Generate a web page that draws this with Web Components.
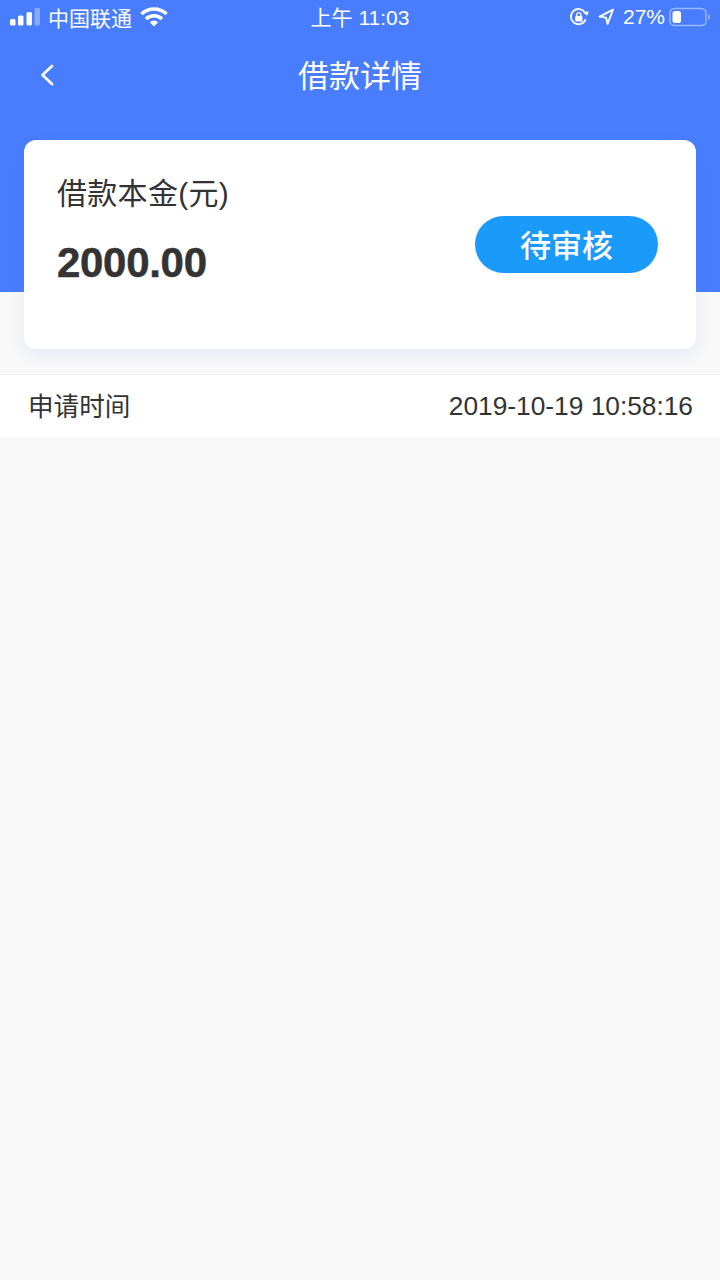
<!DOCTYPE html>
<html lang="zh">
<head>
<meta charset="utf-8">
<title>借款详情</title>
<style>
  html, body { margin: 0; height: 100%; }
  body { font-family: "Liberation Sans", "Noto Sans CJK SC", sans-serif; }
</style>
</head>
<body>
<loan-page>
  <status-bar></status-bar>
  <nav-bar>借款详情</nav-bar>
  <loan-card label="借款本金(元)" amount="2000.00" status="待审核"></loan-card>
  <info-row label="申请时间" value="2019-10-19 10:58:16"></info-row>
</loan-page>

<script>
class LoanPage extends HTMLElement {
  constructor() {
    super();
    this.attachShadow({ mode: "open" });
    this.shadowRoot.innerHTML = `
    <style>
    :host {
      display: flex;
      flex-direction: column;
      width: 720px;
      height: 1280px;
      overflow: hidden;
      background: linear-gradient(#487dff 292px, #f8f8f9 292px);
    }
    </style>
    <slot></slot>
    `;
  }
}
customElements.define("loan-page", LoanPage);

class StatusBar extends HTMLElement {
  constructor() {
    super();
    this.attachShadow({ mode: "open" });
    this.shadowRoot.innerHTML = `
    <style>
    :host {
      display: grid;
      grid-template-columns: 1fr auto 1fr;
      align-items: center;
      height: 34px;
      padding: 0 10px;
      color: #fff;
      font-size: 21px;
    }
    .left, .right { display: flex; align-items: center; }
    .right { justify-content: flex-end; }
    svg { display: block; }
    .carrier { margin: 0 8px; padding-bottom: 1px; }
    .pct { margin: 0 4px 0 9px; padding-bottom: 1px; }
    .time { padding-bottom: 2px; }
    </style>
    <div class="left">
      <svg width="30" height="20" viewBox="0 0 30 20">
        <rect x="0" y="12" width="5.500" height="6.500" rx="1.500" fill="#fff"/>
        <rect x="8" y="8.500" width="5.500" height="10" rx="1.500" fill="#fff"/>
        <rect x="16.500" y="5" width="5.500" height="13.500" rx="1.500" fill="#fff"/>
        <rect x="24.500" y="1" width="5.500" height="17.500" rx="1.500" fill="#fff" opacity=".35"/>
      </svg>
      <span class="carrier">中国联通</span>
      <svg width="28" height="20" viewBox="0 0 28 20">
        <path d="M1.500 7a18 18 0 0 1 25 0" fill="none" stroke="#fff" stroke-width="3.600"/>
        <path d="M6 12a11.500 11.500 0 0 1 16 0" fill="none" stroke="#fff" stroke-width="3.600"/>
        <path d="M9.800 15.200a6 6 0 0 1 8.400 0L14 19.600z" fill="#fff"/>
      </svg>
    </div>
    <div class="time">上午 11:03</div>
    <div class="right">
      <svg width="20" height="20" viewBox="0 0 20 20">
        <path d="M16.600 12.400A7.600 7.600 0 1 1 16 5.600" fill="none" stroke="#fff" stroke-width="1.800"/>
        <path d="M14 5.600l4.400 3.200 1.200-4.600z" fill="#fff"/>
        <rect x="6.200" y="9" width="7.200" height="5.600" rx="1" fill="#fff"/>
        <path d="M7.800 9.500V7.600a2 2 0 0 1 4 0v1.900" fill="none" stroke="#fff" stroke-width="1.300"/>
      </svg>
      <svg width="16" height="18" viewBox="0 0 16 18" style="margin-left:9px">
        <path d="M15 1.600L1.600 8.600l6.400 1 1.600 6.400z" fill="none" stroke="#fff" stroke-width="1.900" stroke-linejoin="round"/>
      </svg>
      <span class="pct">27%</span>
      <svg width="41" height="20" viewBox="0 0 41 20">
        <rect x="1" y="1.500" width="36" height="17" rx="4.500" fill="none" stroke="#fff" stroke-opacity=".45" stroke-width="1.400"/>
        <rect x="3.500" y="4" width="8.500" height="12" rx="2.500" fill="#fff"/>
        <path d="M39 7.200c1.200.4 1.800 1.400 1.800 2.800s-.6 2.400-1.800 2.800z" fill="#fff" fill-opacity=".45"/>
      </svg>
    </div>
    `;
  }
}
customElements.define("status-bar", StatusBar);

class NavBar extends HTMLElement {
  constructor() {
    super();
    this.attachShadow({ mode: "open" });
    this.shadowRoot.innerHTML = `
    <style>
    :host {
      display: grid;
      grid-template-columns: 1fr auto 1fr;
      align-items: center;
      height: 82px;
      margin-bottom: 24px;
      padding: 0 40px;
      color: #fff;
      font-size: 31px;
    }
    .title { padding-bottom: 4px; }
    svg { display: block; }
    </style>
    <svg width="14" height="22" viewBox="0 0 14 22">
      <path d="M12 2L2.500 11 12 20" fill="none" stroke="#fff" stroke-width="2.700" stroke-linecap="round" stroke-linejoin="round"/>
    </svg>
    <div class="title"><slot></slot></div>
    <span></span>
    `;
  }
}
customElements.define("nav-bar", NavBar);

class LoanCard extends HTMLElement {
  constructor() {
    super();
    this.attachShadow({ mode: "open" });
    this.shadowRoot.innerHTML = `
    <style>
    :host {
      display: flex;
      justify-content: space-between;
      box-sizing: border-box;
      height: 209px;
      margin: 0 24px 25px;
      padding: 36px 38px 0 33px;
      background: #fff;
      border-radius: 12px;
      box-shadow: 0 6px 16px rgba(72, 110, 220, .09);
      color: #333;
    }
    .label { font-size: 30px; line-height: 36px; letter-spacing: .3px; }
    .amount {
      margin-top: 22px;
      font-size: 42px;
      line-height: 58px;
      font-weight: bold;
      letter-spacing: -.3px;
      -webkit-text-stroke: .5px #333;
    }
    .status {
      align-self: flex-start;
      width: 183px;
      height: 57px;
      margin-top: 40px;
      border-radius: 29px;
      background: #1a9bfc;
      color: #fff;
      font-size: 31px;
      font-weight: 500;
      line-height: 61px;
      text-align: center;
    }
    </style>
    <div>
      <div class="label"></div>
      <div class="amount"></div>
    </div>
    <div class="status"></div>
    `;
  }
  connectedCallback() {
    this.shadowRoot.querySelector(".label").textContent = this.getAttribute("label");
    this.shadowRoot.querySelector(".amount").textContent = this.getAttribute("amount");
    this.shadowRoot.querySelector(".status").textContent = this.getAttribute("status");
  }
}
customElements.define("loan-card", LoanCard);

class InfoRow extends HTMLElement {
  constructor() {
    super();
    this.attachShadow({ mode: "open" });
    this.shadowRoot.innerHTML = `
    <style>
    :host {
      display: flex;
      justify-content: space-between;
      align-items: center;
      box-sizing: border-box;
      height: 63px;
      padding: 0 27px 2px 28px;
      background: #fff;
      border-top: 1px solid #f1f1f3;
      color: #333;
      font-size: 25.600px;
    }
    .label { margin-bottom: 2px; }
    .value { margin-top: 2px; font-size: 26.300px; }
    </style>
    <span class="label"></span>
    <span class="value"></span>
    `;
  }
  connectedCallback() {
    this.shadowRoot.querySelector(".label").textContent = this.getAttribute("label");
    this.shadowRoot.querySelector(".value").textContent = this.getAttribute("value");
  }
}
customElements.define("info-row", InfoRow);
</script>
</body>
</html>
